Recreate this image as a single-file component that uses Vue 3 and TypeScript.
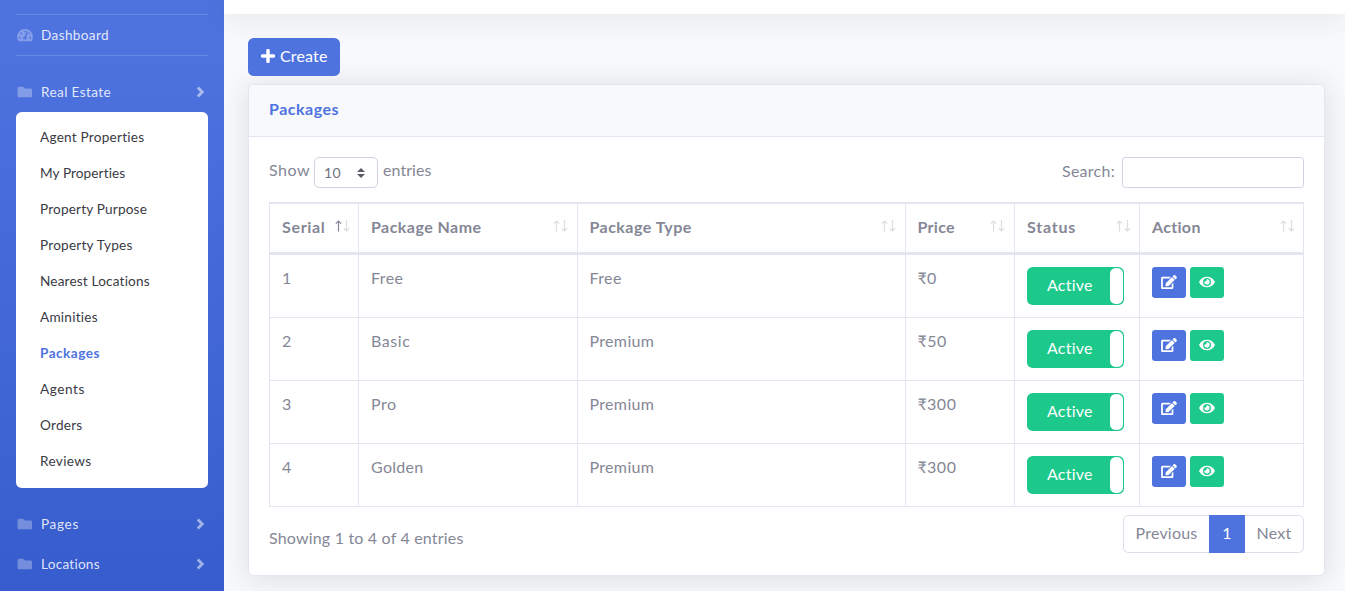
<script setup lang="ts">
interface Label {
  text: string
  width: number
}
interface Column extends Label {
  sorted?: boolean
}
interface Row {
  serial: Label
  name: Label
  type: Label
  price: Label
}

const submenu: (Label & { active?: boolean })[] = [
  { text: 'Agent Properties', width: 104.5 },
  { text: 'My Properties', width: 85.5 },
  { text: 'Property Purpose', width: 107 },
  { text: 'Property Types', width: 92.5 },
  { text: 'Nearest Locations', width: 110 },
  { text: 'Aminities', width: 58 },
  { text: 'Packages', width: 60, active: true },
  { text: 'Agents', width: 45 },
  { text: 'Orders', width: 42.5 },
  { text: 'Reviews', width: 51.5 },
]

const sections: Label[] = [
  { text: 'Pages', width: 38 },
  { text: 'Locations', width: 59 },
]

const columns: Column[] = [
  { text: 'Serial', width: 43.5, sorted: true },
  { text: 'Package Name', width: 110.5 },
  { text: 'Package Type', width: 102.5 },
  { text: 'Price', width: 37.5 },
  { text: 'Status', width: 49 },
  { text: 'Action', width: 49 },
]

const rows: Row[] = [
  { serial: { text: '1', width: 9.5 }, name: { text: 'Free', width: 32.5 }, type: { text: 'Free', width: 32.5 }, price: { text: '₹0', width: 19.5 } },
  { serial: { text: '2', width: 9.5 }, name: { text: 'Basic', width: 39.5 }, type: { text: 'Premium', width: 65 }, price: { text: '₹50', width: 29.5 } },
  { serial: { text: '3', width: 9.5 }, name: { text: 'Pro', width: 25.5 }, type: { text: 'Premium', width: 65 }, price: { text: '₹300', width: 39 } },
  { serial: { text: '4', width: 9.5 }, name: { text: 'Golden', width: 52.5 }, type: { text: 'Premium', width: 65 }, price: { text: '₹300', width: 39 } },
]

// Tracks each label out so that it fills its intended measure.
const vFit = {
  mounted(el: HTMLElement, binding: { value: number }) {
    const count = (el.textContent ?? '').length
    const natural = el.getBoundingClientRect().width
    el.style.letterSpacing = `${(binding.value - natural) / count}px`
  },
}
</script>

<template>
  <div class="page">
    <aside class="sidebar">
      <hr class="rule" />
      <a class="nav dash">
        <svg class="nav-icon" viewBox="0 0 576 512"><path fill-rule="evenodd" d="M288 32C129 32 0 161 0 320c0 53 14 102 39 145 6 9 16 15 27 15h444c11 0 21-6 27-15 25-43 39-92 39-145C576 161 447 32 288 32zm0 64c18 0 32 14 32 32s-14 32-32 32-32-14-32-32 14-32 32-32zM96 384a32 32 0 1 1 0-64 32 32 0 0 1 0 64zm48-160a32 32 0 1 1 0-64 32 32 0 0 1 0 64zm247-77-61 184c13 12 22 28 22 48 0 13-4 24-10 35H234c-6-11-10-22-10-35 0-34 27-62 61-64l61-183c4-13 18-20 30-16 13 4 20 18 15 31zm14 68 16-46c4-4 8-9 11-9a32 32 0 1 1 0 64c-11 0-21-4-27-9zm75 169a32 32 0 1 1 0-64 32 32 0 0 1 0 64z" /></svg>
        <span v-fit="68" class="t">Dashboard</span>
      </a>
      <hr class="rule" />
      <a class="nav first">
        <svg class="nav-icon" viewBox="0 0 576 512"><path d="M64 64h160l64 64h208a48 48 0 0 1 48 48v224a48 48 0 0 1-48 48H64a48 48 0 0 1-48-48V112a48 48 0 0 1 48-48z" /></svg>
        <span v-fit="70" class="t">Real Estate</span>
        <svg class="chev" viewBox="0 0 8 12"><path d="M1.8 1.6 6.2 6 1.8 10.4" /></svg>
      </a>
      <div class="submenu">
        <a v-for="item in submenu" :key="item.text" :class="{ active: item.active }"><span v-fit="item.width" class="t">{{ item.text }}</span></a>
      </div>
      <a v-for="item in sections" :key="item.text" class="nav">
        <svg class="nav-icon" viewBox="0 0 576 512"><path d="M64 64h160l64 64h208a48 48 0 0 1 48 48v224a48 48 0 0 1-48 48H64a48 48 0 0 1-48-48V112a48 48 0 0 1 48-48z" /></svg>
        <span v-fit="item.width" class="t">{{ item.text }}</span>
        <svg class="chev" viewBox="0 0 8 12"><path d="M1.8 1.6 6.2 6 1.8 10.4" /></svg>
      </a>
    </aside>

    <div class="main">
      <div class="topbar"></div>
      <div class="content">
        <button class="create">
          <svg viewBox="0 0 14 14"><path d="M7 1.5v11M1.5 7h11" /></svg>
          <span v-fit="47.5" class="t">Create</span>
        </button>
        <section class="card">
          <header><span v-fit="70" class="t">Packages</span></header>
          <div class="body">
            <div class="controls">
              <span v-fit="41" class="t show">Show</span>
              <div class="select">
                <span v-fit="17" class="t">10</span>
                <svg viewBox="0 0 8 10"><path d="M4 0 8 4H0zM4 10 0 6h8z" /></svg>
              </div>
              <span v-fit="48.5" class="t show">entries</span>
              <span v-fit="53" class="t search">Search:</span>
              <input type="text" aria-label="Search" />
            </div>
            <table>
              <colgroup><col class="c1" /><col class="c2" /><col class="c3" /><col class="c4" /><col class="c5" /><col class="c6" /></colgroup>
              <thead>
                <tr>
                  <th v-for="col in columns" :key="col.text">
                    <div class="head">
                      <span v-fit="col.width" class="t">{{ col.text }}</span>
                      <svg class="sort" :class="{ sorted: col.sorted }" viewBox="0 0 15 12"><path class="up" d="M3.5 11.500V1.200M.8 3.700 3.500 1l2.700 2.700" /><path class="down" d="M11.500 0v10.500M8.800 8.200l2.700 2.600 2.700-2.600" /></svg>
                    </div>
                  </th>
                </tr>
              </thead>
              <tbody>
                <tr v-for="row in rows" :key="row.serial.text">
                  <td><span v-fit="row.serial.width" class="t">{{ row.serial.text }}</span></td>
                  <td><span v-fit="row.name.width" class="t">{{ row.name.text }}</span></td>
                  <td><span v-fit="row.type.width" class="t">{{ row.type.text }}</span></td>
                  <td><span v-fit="row.price.width" class="t">{{ row.price.text }}</span></td>
                  <td><div class="toggle"><span v-fit="46" class="t">Active</span><i></i></div></td>
                  <td>
                    <div class="actions">
                      <button class="edit"><svg viewBox="0 0 576 512"><path d="m402.600 83.200 90.200 90.200c3.800 3.800 3.800 10 0 13.800L274.400 405.600l-92.800 10.300c-12.400 1.400-22.900-9.100-21.500-21.500l10.300-92.800L388.800 83.200c3.800-3.800 10-3.800 13.800 0zm162-22.900-48.800-48.800c-15.200-15.200-39.900-15.200-55.200 0l-35.400 35.400c-3.800 3.800-3.800 10 0 13.800l90.200 90.200c3.800 3.800 10 3.800 13.800 0l35.400-35.400c15.200-15.300 15.200-40 0-55.200zM384 346.200V448H64V128h229.800c3.200 0 6.200-1.300 8.500-3.500l40-40c7.600-7.600 2.200-20.500-8.500-20.500H48C21.500 64 0 85.500 0 112v352c0 26.500 21.500 48 48 48h352c26.500 0 48-21.500 48-48V306.200c0-10.700-12.900-16-20.500-8.500l-40 40c-2.200 2.300-3.500 5.300-3.500 8.500z" /></svg></button>
                      <button class="view"><svg viewBox="0 0 576 512"><path d="M572.500 241.400C518.300 135.600 410.900 64 288 64S57.700 135.600 3.500 241.400a32.400 32.400 0 0 0 0 29.200C57.700 376.400 165.100 448 288 448s230.300-71.600 284.500-177.400a32.400 32.400 0 0 0 0-29.200zM288 400a144 144 0 1 1 144-144 143.900 143.900 0 0 1-144 144zm0-240a95.300 95.300 0 0 0-25.300 3.800 47.900 47.900 0 0 1-66.900 66.900A95.800 95.800 0 1 0 288 160z" /></svg></button>
                    </div>
                  </td>
                </tr>
              </tbody>
            </table>
            <div class="footer">
              <span v-fit="194.500" class="t info">Showing 1 to 4 of 4 entries</span>
              <nav class="pages">
                <a class="prev"><span v-fit="62" class="t">Previous</span></a>
                <a class="current"><span v-fit="9.5" class="t">1</span></a>
                <a class="next"><span v-fit="35" class="t">Next</span></a>
              </nav>
            </div>
          </div>
        </section>
      </div>
    </div>
  </div>
</template>

<style>
body { margin: 0; overflow: hidden; }
</style>

<style scoped>
* { box-sizing: border-box; }
.page {
  display: flex;
  width: 1345px;
  height: 591px;
  overflow: hidden;
  font: 400 16px/24px Lato, "Noto Sans", sans-serif;
  color: #858796;
  background: #f8f9fc;
}
.t { display: inline-block; white-space: nowrap; transform: translateY(-1px); }
svg { display: block; flex: none; }
button { border: 0; padding: 0; font: inherit; color: #fff; }

.sidebar {
  width: 224px;
  flex: none;
  padding-top: 14px;
  background: linear-gradient(180deg, #4e73df 40px, #375ccd 591px);
}
.rule { margin: 0 16px; border: 0; height: 1px; background: rgba(255, 255, 255, .15); }
.nav {
  display: flex;
  align-items: center;
  height: 40px;
  padding: 0 20px 0 17px;
  font-size: 13.6px;
  color: rgba(255, 255, 255, .85);
}
.nav .t { transform: none; }
.nav-icon { width: 16px; height: 14px; margin-right: 8px; fill: rgba(255, 255, 255, .3); }
.nav.first { margin-top: 16px; }
.chev { width: 8px; height: 12px; margin-left: auto; fill: none; stroke: rgba(255, 255, 255, .52); stroke-width: 2.8; }
.submenu {
  margin: 0 16px 16px;
  padding: 8px 0;
  height: 376px;
  border-radius: 5.6px;
  background: #fff;
  color: #3a3b45;
  font-size: 13.6px;
}
.submenu a { display: flex; align-items: center; height: 36px; padding-left: 24px; }
.submenu .active { color: #4e73df; font-weight: 700; }

.main { flex: 1; min-width: 0; }
.topbar { height: 14px; background: #fff; box-shadow: 0 2.4px 28px rgba(58, 59, 69, .15); }
.content { padding: 24px 20px 0 24px; }
.create {
  position: relative;
  display: flex;
  align-items: center;
  width: 92px;
  height: 38px;
  margin-bottom: 8px;
  padding-left: 13px;
  border-radius: 5.6px;
  background: #4e73df;
}
.create svg { width: 14px; height: 14px; margin: -2px 5px 0 0; fill: none; stroke: #fff; stroke-width: 3.4; stroke-linecap: round; }
.card {
  width: 1077px;
  height: 492px;
  border: 1px solid #e3e6f0;
  border-radius: 5.6px;
  background: #fff;
  box-shadow: 0 2.4px 28px rgba(58, 59, 69, .15);
}
.card header {
  height: 52px;
  padding: 14px 20px 0;
  border-bottom: 1px solid #e3e6f0;
  border-radius: 5px 5px 0 0;
  background: #f8f9fc;
  color: #4e73df;
  font-weight: 700;
}
.card header .t { transform: translateY(-2px); }
.body { padding: 20px 20px 0; }
.controls { display: flex; align-items: flex-start; height: 45px; }
.show { margin-top: 2px; }
.select {
  display: flex;
  align-items: center;
  justify-content: space-between;
  width: 64px;
  height: 31px;
  margin: 0 5px 0 4px;
  padding: 0 12px 0 9px;
  border: 1px solid #d1d3e2;
  border-radius: 5px;
  color: #6e707e;
  font-size: 14px;
}
.select .t { transform: none; }
.select svg { width: 8px; height: 10px; margin-top: 1px; fill: #5a5c69; }
.search { margin: 3px 7px 0 auto; }
input { width: 182px; height: 31px; padding: 0 8px; border: 1px solid #d1d3e2; border-radius: 3.2px; background: #fff; }

table { width: 1035px; table-layout: fixed; border-collapse: separate; border-spacing: 0; }
.c1 { width: 89px; }
.c2 { width: 219px; }
.c3 { width: 328px; }
.c4 { width: 109px; }
.c5 { width: 125px; }
.c6 { width: 165px; }
th, td { padding: 12px 0 0 12px; border-left: 1px solid #e3e6f0; text-align: left; vertical-align: top; }
th:nth-child(3), td:nth-child(3), th:nth-child(4), td:nth-child(4) { padding-left: 11.4px; }
th:last-child, td:last-child { border-right: 1px solid #e3e6f0; }
th { height: 53px; border-top: 2px solid #e3e6f0; border-bottom: 3px solid #e3e6f0; font-weight: 700; }
td { height: 63px; border-bottom: 1px solid #e3e6f0; }
.head { display: flex; justify-content: space-between; }
.sort { width: 15px; height: 12px; margin: 4px 8px 0 0; fill: none; stroke: #dcdde2; stroke-width: 1.2; }
th:nth-child(n+2):nth-child(-n+4) .sort { margin-right: 9px; }
.sorted .up { stroke: #858796; }
.toggle {
  display: flex;
  justify-content: space-between;
  width: 97px;
  height: 38px;
  padding: 1px 1px 1px 20px;
  border-radius: 5.6px;
  background: #1cc88a;
  color: #fff;
}
.toggle .t { margin-top: 6px; }
.toggle i { width: 13px; border-radius: 5.6px; background: #fff; }
.actions { display: flex; gap: 4px; }
.actions button { display: flex; align-items: center; justify-content: center; width: 34px; height: 31px; border-radius: 3.2px; }
.actions svg { width: 16px; height: 14px; fill: #fff; margin-top: -1px; }
.edit { background: #4e73df; }
.view { background: #1cc88a; }

.footer { display: flex; justify-content: space-between; padding-top: 8px; }
.info { margin-top: 12px; }
.pages { display: flex; height: 38px; }
.pages a { display: flex; align-items: center; justify-content: center; border: 1px solid #dddfeb; }
.pages .prev { width: 86px; border-right: 0; border-radius: 5.6px 0 0 5.6px; }
.pages .current { width: 36px; border-color: #4e73df; background: #4e73df; color: #fff; }
.pages .next { width: 59px; border-left: 0; border-radius: 0 5.6px 5.6px 0; }
</style>
